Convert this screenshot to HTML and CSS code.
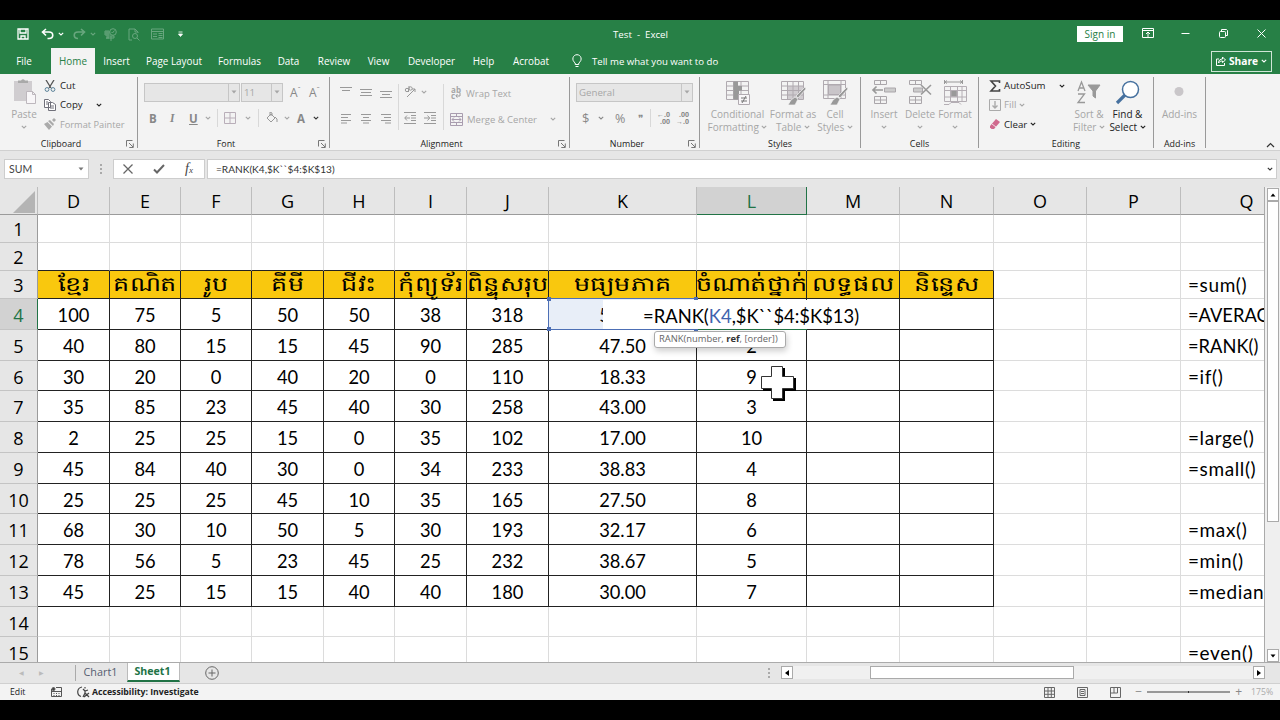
FILE: index.html
```html
<!DOCTYPE html>
<html lang="en">
<head>
    <meta charset="utf-8">
    <title>Test - Excel</title>
    <link rel="stylesheet" href="styles.css">
</head>
<body>
<svg width="0" height="0" class="defs">
    <symbol id="chev" viewBox="0 0 6 4"><path d="M.8.8 3 3 5.200.8" fill="none" stroke="currentColor" stroke-width="1.100"/></symbol>
    <symbol id="launch" viewBox="0 0 8 8"><path d="M.5 6.500V.5h6M3 3l4 4M7.300 3.500v4h-4" fill="none" stroke="currentColor"/></symbol>
    <symbol id="tri" viewBox="0 0 6 4"><path d="M.5.5h5L3 3.500z" fill="currentColor"/></symbol>
</svg>
<div class="window">
    <header class="titlebar">
        <div class="quick">
            <svg width="12" height="12" viewBox="0 0 12 12" fill="none" stroke="#fff" stroke-width="1.300"><path d="M1 1h10v10H1zM3 1v4h6V1M4 11V8h4v3"/></svg>
            <svg class="undo" width="13" height="12" viewBox="0 0 13 12" fill="none" stroke="#fff" stroke-width="1.600"><path d="M5 1 1.500 4 5 7.500M2 4h6c5 0 5 6.500 0 6.500H6.500"/></svg>
            <svg class="ch1" width="6" height="4"><use href="#chev"/></svg>
            <svg class="dim redo" width="13" height="12" viewBox="0 0 13 12" fill="none" stroke="#fff" stroke-width="1.600"><path d="m8 1 3.500 3L8 7.500M11 4H5c-5 0-5 6.500 0 6.500"/></svg>
            <svg class="dim ch1" width="6" height="4"><use href="#chev"/></svg>
            <svg class="dim i1" width="13" height="13" viewBox="0 0 13 13" fill="none" stroke="#fff"><circle cx="9" cy="4" r="3.300"/><path d="m7.500 4 1 1 2-2.500M1 3h4v4H1zM1 5h4M3 3v8M4 8h6v2H4zM7 8v5M2 10h3"/></svg>
            <svg class="dim i2" width="12" height="13" viewBox="0 0 12 13" fill="none" stroke="#fff"><path d="M4 12H1V1h6l3 3v1M7 1v3h3"/><circle cx="7" cy="8" r="2.500"/><path d="m9 10 2.500 2.500"/></svg>
            <svg class="dim i3" width="13" height="12" viewBox="0 0 13 12" fill="none" stroke="#fff"><path d="M.5 1h12v10H.5zM.5 3.500h12M2 6h4M2 8.500h4M7.500 5.500h4M7.500 7.500h4M7.500 9.500h4"/></svg>
            <svg class="i4" width="5" height="7" viewBox="0 0 5 7"><path d="M.5 1h4M.5 3h4L2.500 5.500z" stroke="#fff" fill="#fff" stroke-width=".8"/></svg>
        </div>
        <div class="doc-name">Test&nbsp; -&nbsp; Excel</div>
        <div class="win-buttons">
            <span class="signin">Sign in</span>
            <svg class="w1" width="12" height="10" viewBox="0 0 12 10" fill="none" stroke="#fff"><path d="M.5.500h11v9H.5zM.5 2.500h11M6 9V4M4 6l2-2 2 2"/></svg>
            <svg class="w2" width="9" height="9" viewBox="0 0 9 9" stroke="#fff"><path d="M.5 4.500h8"/></svg>
            <svg class="w3" width="9" height="9" viewBox="0 0 9 9" fill="none" stroke="#fff"><rect x=".5" y="2.500" width="6" height="6" rx="1"/><path d="M2.500 2V.5h5l1 1v5H7"/></svg>
            <svg class="w4" width="9" height="9" viewBox="0 0 9 9" stroke="#fff"><path d="m.5.500 8 8m0-8-8 8"/></svg>
        </div>
    </header>

    <nav class="tabs">
        <span class="t-file">File</span>
        <span class="t-home active">Home</span>
        <span class="t-insert">Insert</span>
        <span class="t-layout">Page Layout</span>
        <span class="t-formulas">Formulas</span>
        <span class="t-data">Data</span>
        <span class="t-review">Review</span>
        <span class="t-view">View</span>
        <span class="t-dev">Developer</span>
        <span class="t-help">Help</span>
        <span class="t-acrobat">Acrobat</span>
        <svg class="bulb" width="10" height="14" viewBox="0 0 10 14" fill="none" stroke="#fff"><path d="M3.200 10.500V9C-1 6 1 .7 5 .7S11 6 6.800 9v1.500zM3.500 12.500h3"/></svg>
        <span class="tell">Tell me what you want to do</span>
        <span class="share">
            <svg width="10" height="10" viewBox="0 0 10 10" fill="none" stroke="#fff"><path d="M3 3H.5v6.500h8V7M2.500 7c0-3 2-4 4-4V1l3 3-3 2.500V5c-2 0-3 .5-4 2z"/></svg>
            Share
            <svg width="6" height="4"><use href="#chev"/></svg>
        </span>
    </nav>

    <section class="ribbon">
        <div class="group g-clipboard">
            <div class="group-body">
                <div class="big paste off">
                    <svg width="25" height="28" viewBox="0 0 25 28"><path d="M2 3h18v20H2z" fill="#d0cdd0"/><path d="M6 5V2.500h3Q11 0 13 2.500h3V5z" fill="#a9a9a9"/><path d="M14.500 13.500h6l3 3v9h-9zM20.500 13.500v3h3" fill="#f8f6f8" stroke="#bdb7bd"/></svg>
                    <span>Paste</span>
                    <svg width="6" height="4"><use href="#chev"/></svg>
                </div>
                <div class="stack clip-list">
                    <div><svg width="12" height="12" viewBox="0 0 12 12" fill="none"><path d="m2 0 5 8M10 0 5 8" stroke="#555" stroke-width="1.300"/><circle cx="3" cy="9.500" r="1.900" stroke="#5b8299"/><circle cx="9" cy="9.500" r="1.900" stroke="#5b8299"/></svg>Cut</div>
                    <div><svg width="12" height="12" viewBox="0 0 12 12" fill="#fff" stroke="#70707a"><path d="M.5.500h4l2 2v6h-6zM4.500 3.500h4l3 2v6h-7zM6 7h4M6 9h4M2 3h2M2 5h2"/></svg>Copy<svg class="copy-ch" width="6" height="4"><use href="#chev"/></svg></div>
                    <div class="off painter"><svg width="12" height="12" viewBox="0 0 12 12" fill="#aaa"><path d="m8 2 2-2 2 2-2 2zM4 3l2-1 4 4-1 2zM0 6l3.500-2L8 8.500 5 12z"/></svg>Format Painter</div>
                </div>
            </div>
            <div class="group-name">Clipboard<svg width="8" height="8"><use href="#launch"/></svg></div>
        </div>

        <div class="group g-font off">
            <div class="group-body col">
                <div class="line l1">
                    <span class="combo font-name"><i></i><b><svg width="6" height="4"><use href="#tri"/></svg></b></span>
                    <span class="combo font-size"><i>11</i><b><svg width="6" height="4"><use href="#tri"/></svg></b></span>
                    <span class="grow">A<sup>&#710;</sup></span>
                    <span class="grow">A<sup>&#711;</sup></span>
                </div>
                <div class="line l2">
                    <b class="fb">B</b><b class="fi">I</b><b class="fu">U</b>
                    <svg class="c1" width="6" height="4"><use href="#chev"/></svg>
                    <i class="sep"></i>
                    <svg class="bd" width="12" height="12" viewBox="0 0 12 12" fill="none" stroke="#b9aeb9"><path d="M.5.500h11v11H.5zM6 .5v11M.5 6h11"/></svg>
                    <svg class="c2" width="6" height="4"><use href="#chev"/></svg>
                    <i class="sep"></i>
                    <svg class="bk" width="12" height="12" viewBox="0 0 12 12" fill="none" stroke="#999"><path d="m1 6 4-4 4 4-4 4zM4 4V0l2 1v3M9 5l2 2v3"/></svg>
                    <svg class="c3" width="6" height="4"><use href="#chev"/></svg>
                    <b class="fa">A</b>
                    <svg class="c4" width="6" height="4"><use href="#chev"/></svg>
                </div>
            </div>
            <div class="group-name">Font<svg width="8" height="8"><use href="#launch"/></svg></div>
        </div>

        <div class="group g-align off">
            <div class="group-body align-body">
                <div class="al-grid">
                    <svg width="12" height="12" viewBox="0 0 12 12" stroke="#999"><path d="M0 1.500h12M2 4.500h8"/></svg>
                    <svg width="12" height="12" viewBox="0 0 12 12" stroke="#999"><path d="M0 3.500h12M1 6.500h10M0 9.500h12"/></svg>
                    <svg width="12" height="12" viewBox="0 0 12 12" stroke="#999"><path d="M0 5.500h12M2 8.500h8M0 11.500h12"/></svg>
                    <svg width="12" height="12" viewBox="0 0 12 12" stroke="#999"><path d="M1 2.500h10M1 5.500h7M1 8.500h10M1 11h6"/></svg>
                    <svg width="12" height="12" viewBox="0 0 12 12" stroke="#999"><path d="M1 2.500h10M3 5.500h6M1 8.500h10M3 11h6"/></svg>
                    <svg width="12" height="12" viewBox="0 0 12 12" stroke="#999"><path d="M1 2.500h10M4 5.500h7M1 8.500h10M5 11h6"/></svg>
                </div>
                <div class="indent">
                    <div><svg width="14" height="12" viewBox="0 0 14 12" stroke="#999" fill="none"><path d="M3 11 11 3M8 3h3v3"/><circle cx="3" cy="4" r="1.700"/><circle cx="6.500" cy="2.500" r="1.700"/><path d="M4.500 2.500v3.500M5 0v4"/></svg><svg width="6" height="4"><use href="#chev"/></svg></div>
                    <div class="ind2"><svg width="12" height="12" viewBox="0 0 12 12" stroke="#999" fill="none"><path d="M0 .5h12M7 3.500h5M7 6h5M7 8.500h5M0 11.500h12M6 6H1M3 3.500.7 6 3 8.500" /></svg><svg width="12" height="12" viewBox="0 0 12 12" stroke="#999" fill="none"><path d="M0 .5h12M7 3.500h5M7 6h5M7 8.500h5M0 11.500h12M0 6h5.500M3.500 3.500 5.700 6 3.500 8.500"/></svg></div>
                </div>
                <div class="wrap">
                    <div><span class="wrap-icon"><span>ab</span><span>c<svg width="6" height="5" viewBox="0 0 6 5" fill="none" stroke="#999"><path d="M5 0v3H1M2.500 1 .8 3l1.700 1.700"/></svg></span></span>Wrap Text</div>
                    <div><svg width="13" height="13" viewBox="0 0 13 13" fill="none" stroke="#a99daf"><path d="M.5.500h12v12H.5zM.5 3.500h12M.5 9.500h12M6.500.5v3M6.500 9.500v3M2 6.500h9M4 4.500l-2 2 2 2M9 4.500l2 2-2 2"/></svg>Merge &amp; Center<svg class="mc" width="6" height="4"><use href="#chev"/></svg></div>
                </div>
            </div>
            <div class="group-name">Alignment<svg width="8" height="8"><use href="#launch"/></svg></div>
        </div>

        <div class="group g-number off">
            <div class="group-body col">
                <div class="line l1"><span class="combo general"><i>General</i><b><svg width="6" height="4"><use href="#tri"/></svg></b></span></div>
                <div class="line l2 nums">
                    <span class="dollar">$</span><svg class="n1" width="6" height="4"><use href="#chev"/></svg><span class="pct">%</span><span class="comma">&#10078;</span>
                    <i class="sep"></i>
                    <span class="dec">&#8592;.0<br>.00</span><span class="dec">.00<br>&#8594;.0</span>
                </div>
            </div>
            <div class="group-name">Number<svg width="8" height="8"><use href="#launch"/></svg></div>
        </div>

        <div class="group g-styles off">
            <div class="group-body">
                <div class="big s1"><svg width="26" height="26" viewBox="0 0 26 26" fill="none" stroke="#b0aab0"><path d="M1.500 1.500h22v18h-22zM1.500 6h22M1.500 10.500h22M1.500 15h22M8.500 1.500v18M16 1.500v18"/><path d="M8.500 1.500H13V6h4v4.500h-3v9H8.500z" fill="#999" stroke="none"/><path d="M13.500 14.500h11v10h-11z" fill="#f8f6f8"/><path d="M16 18h6M16 21h6M21 16l-4 7" stroke="#777"/></svg>
                    <span>Conditional<br>Formatting <svg width="6" height="4"><use href="#chev"/></svg></span></div>
                <div class="big s2"><svg width="26" height="26" viewBox="0 0 26 26" fill="none" stroke="#b0aab0"><path d="M8 6h15v14H8z" fill="#d0ccd0" stroke="none"/><path d="M1.500 1.500h22v18h-22zM1.500 6h22M1.500 10.500h22M1.500 15h22M7.500 1.500v18M13 1.500v18M18.500 1.500v18"/><path d="m25 7-9 9 2 2 8-9zM15 17l-4 3-3 5h7l3-6z" fill="#999" stroke="#f3f3f3" stroke-width=".7"/></svg>
                    <span>Format as<br>Table <svg width="6" height="4"><use href="#chev"/></svg></span></div>
                <div class="big s3"><svg width="26" height="26" viewBox="0 0 26 26" fill="none" stroke="#b0aab0"><path d="M1.500.5h22v18h-22zM1.500 4.500h22M1.500 15h22M6 .5v18M19 .5v18"/><path d="M6.500 5h12v9.500h-12z" fill="#c9c5c9"/><path d="m25 7-9 9 2 2 8-9zM15 17l-4 3-3 5h7l3-6z" fill="#999" stroke="#f3f3f3" stroke-width=".7"/></svg>
                    <span>Cell<br>Styles <svg width="6" height="4"><use href="#chev"/></svg></span></div>
            </div>
            <div class="group-name">Styles</div>
        </div>

        <div class="group g-cells off">
            <div class="group-body">
                <div class="big c-ins"><svg width="26" height="26" viewBox="0 0 26 26" fill="none" stroke="#aaa6aa"><path d="M3.500.5h12v4h-12zM9.500.5v4M3.500 16.500h12v7h-12zM9.500 16.500v7M3.500 20h12"/><path d="M13.500 8h11v4h-11z" fill="#ccc"/><path d="M12 10H2M5.500 6.500 2 10l3.500 3.500" stroke="#999" stroke-width="1.700"/></svg><span>Insert</span><svg width="6" height="4"><use href="#chev"/></svg></div>
                <div class="big c-del"><svg width="26" height="26" viewBox="0 0 26 26" fill="none" stroke="#aaa6aa"><path d="M2.500.5h12v4h-12zM8.500.5v4M2.500 16.500h12v7h-12zM8.500 16.500v7M2.500 20h12"/><path d="M6.500 8h9v4h-9z" fill="#ccc"/><path d="m14 5 10 9.500M24 5l-10 9.500" stroke="#999" stroke-width="1.600"/></svg><span>Delete</span><svg width="6" height="4"><use href="#chev"/></svg></div>
                <div class="big c-fmt"><svg width="26" height="26" viewBox="0 0 26 26" fill="none" stroke="#b4aeb4"><path d="M2.500 0v4M20.500 0v4M3 2h17M5 .5 3 2l2 1.500M18 .5 20 2l-2 1.500" stroke="#999"/><path d="M2.500 6.500h22v15h-22zM2.500 10.500h22M2.500 17h22M8.500 6.500v15M15.500 6.500v15M20 6.500v15M2 24.500h5l2-2h8l2 2"/><path d="M9 10.500h6v6H9z" fill="#999"/></svg><span>Format</span><svg width="6" height="4"><use href="#chev"/></svg></div>
            </div>
            <div class="group-name">Cells</div>
        </div>

        <div class="group g-edit">
            <div class="group-body">
                <div class="stack edit-list">
                    <div><svg width="12" height="12" viewBox="0 0 12 12" fill="none" stroke="#444" stroke-width="1.600"><path d="M10.500 3V1H2l4.500 5L2 11h8.500V9"/></svg>AutoSum<svg class="as-ch" width="6" height="4"><use href="#chev"/></svg></div>
                    <div class="off"><svg width="12" height="12" viewBox="0 0 12 12" fill="none" stroke="#aaa"><path d="M.5.500h11v11H.5z"/><path d="M6 2v7M3.500 6.500 6 9l2.500-2.500" stroke-width="1.400"/></svg>Fill <svg width="6" height="4"><use href="#chev"/></svg></div>
                    <div><svg width="12" height="12" viewBox="0 0 12 12"><path d="m1 8 6-7 4 3-6 7H2.500L1 9.500z" fill="#d06a8e"/><path d="m3 6 4 3" stroke="#f3dbe4"/></svg>Clear <svg width="6" height="4"><use href="#chev"/></svg></div>
                </div>
                <div class="big sort off"><svg width="26" height="26" viewBox="0 0 26 26" fill="none" stroke="#999"><path d="M2 11 5.500 2 9 11M3.300 8h4.500M2 14h6.500L2 22.500h7" stroke-width="1.300"/><path d="M12 5h12l-4.500 6v7L17 16v-5z" fill="#999"/></svg><span>Sort &amp;<br>Filter <svg width="6" height="4"><use href="#chev"/></svg></span></div>
                <div class="big find"><svg width="26" height="26" viewBox="0 0 26 26" fill="none" stroke="#46719f"><circle cx="15.500" cy="9.500" r="8" fill="#fff" stroke-width="1.500"/><path d="m10 15-8 8" stroke-width="3.200"/></svg><span>Find &amp;<br>Select <svg width="6" height="4"><use href="#chev"/></svg></span></div>
            </div>
            <div class="group-name">Editing</div>
        </div>

        <div class="group g-addins">
            <div class="group-body">
                <div class="big add off"><svg width="26" height="26" viewBox="0 0 26 26"><circle cx="12" cy="11.500" r="4.500" fill="#c9c6c9"/></svg><span>Add-ins</span></div>
            </div>
            <div class="group-name">Add-ins</div>
        </div>
        <svg class="collapse" width="9" height="6" viewBox="0 0 9 6" fill="none" stroke="#333" stroke-width="1.200"><path d="m1 5 3.500-3.500L8 5"/></svg>
    </section>

    <section class="formula-bar">
        <div class="name-box">SUM<svg width="6" height="4"><use href="#tri"/></svg></div>
        <div class="dots"><i></i><i></i><i></i></div>
        <div class="fx-box">
            <svg width="10" height="10" viewBox="0 0 10 10" stroke="#666" stroke-width="1.300"><path d="m.5.500 9 9m0-9-9 9"/></svg>
            <svg width="12" height="10" viewBox="0 0 12 10" stroke="#666" stroke-width="2" fill="none"><path d="m1 5.500 3 3L11 1"/></svg>
            <em>f<small>x</small></em>
        </div>
        <div class="formula">=RANK(K4,$K``$4:$K$13)<svg width="6" height="4"><use href="#chev"/></svg></div>
    </section>

    <main class="sheet-area">
        <div class="sheet">
            <table>
                <colgroup>
                    <col class="w38"><col class="w72"><col class="w71"><col class="w71"><col class="w72"><col class="w71"><col class="w72"><col class="w82"><col class="w148"><col class="w110"><col class="w93"><col class="w94"><col class="w93"><col class="w94"><col class="w132">
                </colgroup>
                <tr class="letters"><th class="corner"><svg width="22" height="22" viewBox="0 0 22 22"><path d="M22 0v22H0z" fill="#b4b4b4"/></svg></th><th>D</th><th>E</th><th>F</th><th>G</th><th>H</th><th>I</th><th>J</th><th>K</th><th class="sel">L</th><th>M</th><th>N</th><th>O</th><th>P</th><th>Q</th></tr>
                <tr class="h28"><th>1</th><td></td><td></td><td></td><td></td><td></td><td></td><td></td><td></td><td></td><td></td><td></td><td></td><td></td><td></td></tr>
                <tr class="h28 above"><th>2</th><td></td><td></td><td></td><td></td><td></td><td></td><td></td><td></td><td></td><td></td><td></td><td></td><td></td><td></td></tr>
                <tr class="h28 khmer box"><th>3</th><td><span>ខ្មែរ</span></td><td><span>គណិត</span></td><td><span>រូប</span></td><td><span>គីមី</span></td><td><span>ជីវះ</span></td><td><span>កុំព្យូទ័រ</span></td><td><span>ពិន្ទុសរុប</span></td><td><span>មធ្យមភាគ</span></td><td><span>ចំណាត់ថ្នាក់</span></td><td><span>លទ្ធផល</span></td><td><span>និន្ទេស</span></td><td></td><td></td><td class="lc">=sum()</td></tr>
                <tr class="h31 box"><th class="sel">4</th><td>100</td><td>75</td><td>5</td><td>50</td><td>50</td><td>38</td><td>318</td><td>53.00</td><td></td><td></td><td></td><td></td><td></td><td>=AVERAGE()</td></tr>
                <tr class="h31 box"><th>5</th><td>40</td><td>80</td><td>15</td><td>15</td><td>45</td><td>90</td><td>285</td><td>47.50</td><td>2</td><td></td><td></td><td></td><td></td><td>=RANK()</td></tr>
                <tr class="h30 box"><th>6</th><td>30</td><td>20</td><td>0</td><td>40</td><td>20</td><td>0</td><td>110</td><td>18.33</td><td>9</td><td></td><td></td><td></td><td></td><td class="lc">=if()</td></tr>
                <tr class="h31 box"><th>7</th><td>35</td><td>85</td><td>23</td><td>45</td><td>40</td><td>30</td><td>258</td><td>43.00</td><td>3</td><td></td><td></td><td></td><td></td><td></td></tr>
                <tr class="h31 box"><th>8</th><td>2</td><td>25</td><td>25</td><td>15</td><td>0</td><td>35</td><td>102</td><td>17.00</td><td>10</td><td></td><td></td><td></td><td></td><td class="lc">=large()</td></tr>
                <tr class="h31 box"><th>9</th><td>45</td><td>84</td><td>40</td><td>30</td><td>0</td><td>34</td><td>233</td><td>38.83</td><td>4</td><td></td><td></td><td></td><td></td><td class="lc">=small()</td></tr>
                <tr class="h30 box"><th>10</th><td>25</td><td>25</td><td>25</td><td>45</td><td>10</td><td>35</td><td>165</td><td>27.50</td><td>8</td><td></td><td></td><td></td><td></td><td></td></tr>
                <tr class="h31 box"><th>11</th><td>68</td><td>30</td><td>10</td><td>50</td><td>5</td><td>30</td><td>193</td><td>32.17</td><td>6</td><td></td><td></td><td></td><td></td><td class="lc">=max()</td></tr>
                <tr class="h31 box"><th>12</th><td>78</td><td>56</td><td>5</td><td>23</td><td>45</td><td>25</td><td>232</td><td>38.67</td><td>5</td><td></td><td></td><td></td><td></td><td class="lc">=min()</td></tr>
                <tr class="h31 box"><th>13</th><td>45</td><td>25</td><td>15</td><td>15</td><td>40</td><td>40</td><td>180</td><td>30.00</td><td>7</td><td></td><td></td><td></td><td></td><td class="lc">=median()</td></tr>
                <tr class="h30"><th>14</th><td></td><td></td><td></td><td></td><td></td><td></td><td></td><td></td><td></td><td></td><td></td><td></td><td></td><td></td></tr>
                <tr class="h31"><th>15</th><td></td><td></td><td></td><td></td><td></td><td></td><td></td><td></td><td></td><td></td><td></td><td></td><td></td><td class="lc">=even()</td></tr>
            </table>
            <!-- range highlight, cell editor and argument tooltip float over the grid -->
            <div class="range"><i></i><i></i><i></i><i></i></div>
            <div class="editor">=RANK(<span>K4</span>,$K``$4:$K$13)</div>
            <div class="active-edge"></div>
            <div class="hint">RANK(number, <b>ref</b>, [order])</div>
            <svg class="cursor" width="36" height="36" viewBox="0 0 36 36"><path d="M13 3h12v10h11v13H25v10H13V26H3V13h10z" fill="#000"/><path d="M11.500 1.500h11v10h11v12h-11v10h-11v-10h-10v-12h10z" fill="#fff" stroke="#333"/></svg>
        </div>
        <div class="vscroll">
            <span class="sbtn"><svg width="6" height="4"><use href="#tri" transform="rotate(180 3 2)"/></svg></span>
            <span class="vthumb"></span>
            <span class="sbtn vdown"><svg width="6" height="4"><use href="#tri"/></svg></span>
        </div>
    </main>

    <section class="sheet-tabs">
        <div class="arrows"><span>&#9664;</span><span>&#9654;</span></div>
        <span class="stab">Chart1</span>
        <span class="stab on">Sheet1</span>
        <svg class="plus" width="14" height="14" viewBox="0 0 14 14" fill="none" stroke="#666"><circle cx="7" cy="7" r="6.300"/><path d="M7 3.500v7M3.500 7h7"/></svg>
        <div class="dots hs-dots"><i></i><i></i><i></i></div>
        <div class="hscroll">
            <span class="sbtn"><svg width="4" height="6" viewBox="0 0 4 6"><path d="M4 0v6L0 3z"/></svg></span>
            <span class="hthumb"></span>
            <span class="sbtn hright"><svg width="4" height="6" viewBox="0 0 4 6"><path d="M0 0v6l4-3z"/></svg></span>
        </div>
    </section>

    <footer class="status">
        <span class="mode">Edit</span>
        <svg class="macro" width="11" height="10" viewBox="0 0 11 10" fill="none" stroke="#555"><path d="M.5 2v7.500h10v-9H5M1 4.500h9M2.500 6.500h1M5 6.500h1M7.500 6.500h1M2.500 8.500h1M5 8.500h1M7.500 8.500h1"/><circle cx="2.500" cy="2" r="1.500" fill="#444"/></svg>
        <svg class="acc" width="13" height="12" viewBox="0 0 13 12" fill="none" stroke="#444"><path d="M5 1C-.5 2-.5 9 4 10.500M6 3l2 2 3-1M8 5v2l-2 4M8 7l4 4M12 7l-5 4M8 1v1.500" stroke-width="1.200"/></svg>
        <b>Accessibility: Investigate</b>
        <div class="views">
            <svg width="11" height="11" viewBox="0 0 11 11" fill="none" stroke="#666"><path d="M.5.500h10v10H.5zM.5 4h10M.5 7.300h10M4 .5v10M7.300.5v10"/></svg>
            <svg width="11" height="11" viewBox="0 0 11 11" fill="none" stroke="#666"><path d="M.5.500h10v10H.5zM3 2.500h5v6H3zM4 4.500h3M4 6.500h3"/></svg>
            <svg width="11" height="11" viewBox="0 0 11 11" fill="none" stroke="#666"><path d="M.5.500h10v10H.5zM4 .5V6M7.500.5V6H1"/></svg>
        </div>
        <div class="zoom"><span>&#8722;</span><i></i><span>+</span></div>
        <span class="percent">175%</span>
    </footer>
</div>
</body>
</html>
```
FILE: styles.css
```css
* {
    box-sizing: border-box;
}

body {
    margin: 0;
    background: #000;
    font-family: "Open Sans", "Noto Sans", sans-serif;
    font-size: 10px;
    color: #222;
    overflow: hidden;
}

svg {
    flex: none;
    display: block;
}

i {
    font-style: normal;
}

.defs {
    display: none;
}

.window {
    width: 1280px;
    height: 680px;
    margin: 20px 0;
    background: #e6e6e6;
    display: flex;
    flex-direction: column;
    overflow: hidden;
}

/* title bar */
.titlebar {
    height: 28px;
    background: #278046;
    color: #fff;
    display: flex;
    align-items: center;
    flex: none;
}

.quick {
    display: flex;
    align-items: center;
    width: 613px;
    padding-left: 17px;
}

.dim {
    opacity: .3;
}

.undo { margin-left: 12px; }
.ch1 { margin-left: 4px; }
.redo { margin-left: 9px; }
.i1 { margin-left: 8px; }
.i2 { margin-left: 11px; }
.i3 { margin-left: 11px; }
.i4 { margin-left: 14px; }

.doc-name {
    width: 464px;
    white-space: nowrap;
    font-size: 9.700px;
    padding-top: 1px;
}

.win-buttons {
    display: flex;
    align-items: center;
}

.signin {
    width: 46px;
    height: 16px;
    line-height: 16px;
    background: #fff;
    color: #278046;
    text-align: center;
}

.w1 { margin: 0 0 2px 19px; }
.w2 { margin: 0 0 2px 27px; }
.w3 { margin: 0 0 2px 29px; }
.w4 { margin: 0 0 2px 29px; }

/* ribbon tabs */
.tabs {
    height: 26px;
    background: #278046;
    color: #fff;
    display: flex;
    align-items: center;
    flex: none;
}

.tabs > span {
    line-height: 27px;
    height: 26px;
    text-align: center;
    white-space: nowrap;
    font-size: 9.900px;
}

.tabs .active {
    background: #f3f3f3;
    color: #278046;
}

.t-file { width: 48px; margin-right: 3px; }
.t-home { width: 44px; }
.t-insert { width: 43px; }
.t-layout { width: 72px; }
.t-formulas { width: 59px; }
.t-data { width: 39px; }
.t-review { width: 52px; }
.t-view { width: 37px; }
.t-dev { width: 69px; }
.t-help { width: 35px; }
.t-acrobat { width: 60px; }
.bulb { margin-left: 11px; }

.tabs .tell {
    margin-left: 10px;
    font-size: 9.600px;
}

.tabs .share {
    display: flex;
    align-items: center;
    gap: 3px;
    margin: 0 8px 0 auto;
    width: 61px;
    height: 21px;
    padding-left: 4px;
    border: 1px solid #cfe5d6;
    font-weight: bold;
    font-size: 10.200px;
}

/* ribbon */
.ribbon {
    height: 77px;
    background: #f3f3f3;
    border-bottom: 1px solid #d0d0d0;
    display: flex;
    padding-top: 3px;
    flex: none;
}

.off {
    color: #a6a6a6;
}

.group {
    height: 71px;
    border-right: 1px solid #999;
    display: flex;
    flex-direction: column;
    flex: none;
}

.group-body {
    display: flex;
    height: 59px;
    flex: none;
}

.group-body.col {
    flex-direction: column;
}

.group-name {
    height: 12px;
    line-height: 16px;
    text-align: center;
    color: #222;
    font-size: 8.900px;
    position: relative;
}

.group-name svg {
    position: absolute;
    right: 3px;
    top: 4px;
    color: #777;
}

.g-clipboard { width: 138px; }
.g-font { width: 192px; }
.g-align { width: 240px; }
.g-number { width: 130px; }
.g-styles { width: 161px; }
.g-cells { width: 118px; }
.g-edit { width: 175px; }
.g-addins { width: 52px; }

.g-clipboard .group-name { padding-right: 15px; }
.g-font .group-name { padding-right: 15px; }
.g-align .group-name { padding-right: 16px; }
.g-number .group-name { padding-right: 15px; }

.big {
    display: flex;
    flex-direction: column;
    align-items: center;
    text-align: center;
    line-height: 13px;
    flex: none;
    white-space: nowrap;
    padding-top: 3px;
}

.big > span svg {
    display: inline-block;
    vertical-align: 2px;
}

.big > span {
    margin-top: 2px;
}

.big > span + svg {
    margin-top: 4px;
}

.paste { width: 48px; padding-top: 1px; }

.stack > div {
    display: flex;
    align-items: center;
    height: 19.300px;
    gap: 3px;
    white-space: nowrap;
    font-size: 9.700px;
}

.clip-list { margin: -1px 0 0 -4px; }
.clip-list > div { gap: 4px; }
.copy-ch { margin-left: 9px; }

.stack .painter {
    font-size: 9.250px;
}

.line {
    display: flex;
    align-items: center;
}

.l1 {
    height: 30px;
}

.l2 {
    height: 22px;
}

.combo {
    display: flex;
    height: 19px;
    border: 1px solid #c6c6c6;
    background: #e6e6e6;
    line-height: 17px;
}

.combo i {
    flex: 1;
    padding-left: 2px;
    font-size: 9.700px;
}

.combo b {
    width: 11px;
    border-left: 1px solid #c6c6c6;
    display: flex;
    align-items: center;
    justify-content: center;
}

.font-name { width: 96px; margin-left: 6px; }
.font-size { width: 42px; margin: 0 7px 0 1px; }

.grow {
    width: 19px;
    font-size: 12px;
    color: #888;
    white-space: nowrap;
}

.grow sup {
    font-size: 8px;
    line-height: 1px;
}

.l2 b {
    font-size: 11.500px;
    color: #888;
}

.sep {
    width: 1px;
    height: 18px;
    background: #d8d8d8;
}

.fb { width: 21px; margin-left: 11px; }
.fi { width: 19px; font-style: italic; font-family: "Liberation Serif", serif; }
.fu { text-decoration: underline; width: 9px; }
.c1 { margin: 0 6px 0 7px; }
.bd { margin-left: 6px; }
.c2 { margin: 0 7px 0 9px; }
.bk { margin-left: 7px; }
.c3 { margin: 0 7px 0 6px; }
.c4 { margin-left: 8px; color: #333; }

.al-grid {
    display: grid;
    grid-template-columns: 12px 12px 12px;
    grid-template-rows: 12px 12px;
    gap: 14px 8px;
    padding: 9px 0 0 10px;
    align-content: start;
}

.indent {
    margin: 7px 0 0 6px;
    border-left: 1px solid #d8d8d8;
    border-right: 1px solid #d8d8d8;
    height: 46px;
    width: 46px;
    padding: 2px 0 0 5px;
}

.indent > div {
    display: flex;
    align-items: center;
    gap: 3px;
    height: 12px;
    margin-bottom: 14px;
}

.indent .ind2 {
    gap: 8px;
}

.wrap {
    margin-left: 6px;
    padding-top: 3px;
}

.wrap > div {
    display: flex;
    align-items: center;
    gap: 4px;
    height: 26px;
    white-space: nowrap;
    font-size: 9.500px;
}

.wrap-icon {
    display: flex;
    flex-direction: column;
    width: 12px;
    font-size: 8px;
    line-height: 6px;
    font-weight: bold;
    text-align: center;
}

.wrap-icon span {
    display: flex;
    justify-content: center;
    height: 6px;
}

.mc { margin-left: 9px; }
.general { width: 117px; margin-left: 6px; }

.nums {
    color: #888;
}

.dollar { font-size: 13px; margin-left: 12px; width: 8px; }
.n1 { margin: 0 11px 0 8px; }
.pct { font-size: 12.500px; width: 23px; }
.comma { width: 12px; font-size: 10px; }
.dec { font-size: 7px; line-height: 7px; font-weight: bold; margin-left: 5px; width: 14px; text-align: right; }

.s1 { width: 75px; }
.s2 { width: 36px; }
.s3 { width: 48px; }
.c-ins { width: 46px; }
.c-del { width: 26px; }
.c-fmt { width: 44px; }

.edit-list { width: 90px; padding-left: 10px; margin-top: -1px; }
.as-ch { margin-left: 10px; }
.sort { width: 40px; }
.find { width: 37px; }
.add { width: 51px; }

.collapse {
    margin: 65px 0 0 60px;
}

/* formula bar */
.formula-bar {
    height: 36px;
    display: flex;
    padding: 8px 3px 8px 4px;
    flex: none;
    font-family: Lato, sans-serif;
}

.formula-bar > div:not(.dots) {
    background: #fff;
    border: 1px solid #cdcdcd;
    display: flex;
    align-items: center;
    height: 20px;
}

.name-box {
    width: 85px;
    padding: 0 4px 0 4px;
    justify-content: space-between;
    color: #444;
    font-size: 10.500px;
}

.name-box svg {
    color: #777;
}

.dots {
    width: 24px;
    display: flex;
    flex-direction: column;
    gap: 2px;
    align-items: center;
    justify-content: center;
}

.dots i {
    width: 2px;
    height: 2px;
    background: #aaa;
}

.fx-box {
    width: 92px;
    justify-content: space-between;
    padding: 0 11px 0 9px;
}

.fx-box em {
    font: italic 14px "Liberation Serif", serif;
    color: #444;
}

.fx-box small {
    font-size: 9px;
}

.formula {
    flex: 1;
    margin-left: 2px;
    padding: 0 3px 0 8px;
    justify-content: space-between;
    color: #333;
    font-size: 10.100px;
}

/* grid */
.sheet-area {
    display: flex;
    height: 475px;
    flex: none;
}

.sheet {
    width: 1265px;
    overflow: hidden;
    position: relative;
    background: #fff;
    border-right: 1px solid #aaa;
}

table {
    width: 1313px;
    table-layout: fixed;
    border-collapse: separate;
    border-spacing: 0;
    font-family: Lato, sans-serif;
    font-size: 18.300px;
    color: #000;
}

.w38 { width: 38px; }
.w71 { width: 71px; }
.w72 { width: 72px; }
.w82 { width: 82px; }
.w93 { width: 93px; }
.w94 { width: 94px; }
.w110 { width: 110px; }
.w132 { width: 132px; }
.w148 { width: 148px; }

td, th {
    padding: 0;
    border-right: 1px solid #dcdcdc;
    border-bottom: 1px solid #dcdcdc;
    text-align: center;
    line-height: 24px;
    white-space: nowrap;
}

.h31 > *, .h30 > * {
    padding-top: 2px;
}

th {
    background: #e6e6e6;
    font-weight: normal;
    font-family: "Open Sans", sans-serif;
    font-size: 18px;
    border-right-color: #9b9b9b;
    border-bottom-color: #c4c4c4;
}

td:last-child {
    text-align: left;
    padding-left: 7px;
}

td.lc {
    font-size: 19px;
    letter-spacing: .6px;
}

.letters th {
    border-right-color: #bdbdbd;
    border-bottom-color: #9b9b9b;
}

.letters { height: 28px; }
.h28 { height: 28px; }
.h30 { height: 30px; }
.h31 { height: 31px; }

.corner svg {
    margin: 2px 0 0 13px;
}

.letters .sel {
    background: #d2d2d2;
    color: #217346;
    border-bottom-color: #217346;
}

th.sel {
    background: #d2d2d2;
    color: #217346;
    border-right-color: #217346;
}

.box td:nth-child(-n+12) {
    border-color: #222;
}

.above td:nth-child(-n+12) {
    border-bottom-color: #222;
}

.khmer td:nth-child(-n+12) {
    background: #f9c80e;
    line-height: 20px;
}

.khmer span {
    display: block;
    height: 20px;
    font-size: 20px;
    transform: translateY(-2px) scaleX(1.27);
}

.range {
    position: absolute;
    left: 548px;
    top: 111px;
    width: 149px;
    height: 32px;
    border: 1px solid #4d6fb5;
    background: rgba(68, 114, 196, .12);
}

.range i {
    position: absolute;
    width: 4px;
    height: 4px;
    background: #4d6fb5;
}

.range i:nth-child(1) { left: -2px; top: -2px; }
.range i:nth-child(2) { right: -2px; top: -2px; }
.range i:nth-child(3) { left: -2px; bottom: -2px; }
.range i:nth-child(4) { right: -2px; bottom: -2px; }

.editor {
    position: absolute;
    left: 603px;
    top: 113px;
    width: 259px;
    height: 29px;
    padding-left: 40px;
    background: #fff;
    font-family: Lato, sans-serif;
    font-size: 18.400px;
    line-height: 32px;
    color: #000;
    white-space: nowrap;
}

.editor span {
    color: #3f62ad;
}

.active-edge {
    position: absolute;
    left: 698px;
    top: 142px;
    width: 109px;
    height: 1px;
    background: #217346;
}

.hint {
    position: absolute;
    left: 654px;
    top: 144px;
    width: 132px;
    height: 17px;
    line-height: 14px;
    padding-left: 4px;
    border: 1px solid #aaa;
    border-radius: 3px;
    background: #fff;
    color: #666;
    font-size: 9.400px;
    white-space: nowrap;
    box-shadow: 1px 3px 6px rgba(0, 0, 0, .2);
}

.hint b {
    color: #333;
}

.cursor {
    position: absolute;
    left: 760px;
    top: 178px;
}

/* scroll bars */
.vscroll {
    width: 15px;
    padding: 1px 1px 0 2px;
    display: flex;
    flex-direction: column;
    background: #efefef;
}

.sbtn {
    width: 12px;
    height: 13px;
    background: #fff;
    border: 1px solid #aaa;
    display: flex;
    align-items: center;
    justify-content: center;
    color: #000;
    flex: none;
}

.vthumb {
    height: 321px;
    width: 12px;
    background: #fff;
    border: 1px solid #aaa;
}

.vdown {
    margin-top: auto;
}

.sheet-tabs {
    height: 21px;
    display: flex;
    border-top: 1px solid #ababab;
    flex: none;
}

.arrows {
    width: 76px;
    height: 16px;
    margin-top: 2px;
    padding-left: 19px;
    display: flex;
    gap: 15px;
    align-items: center;
    color: #bbb;
    font-size: 6px;
    border-right: 1px solid #aaa;
}

.stab {
    width: 51px;
    padding-right: 2px;
    text-align: center;
    line-height: 17px;
    font-size: 10.800px;
    color: #555c70;
}

.stab.on {
    width: 53px;
    height: 19px;
    background: #fff;
    color: #217346;
    font-weight: bold;
    font-size: 10.600px;
    border: 1px solid #bbb;
    border-top: 0;
    border-bottom: 2px solid #217346;
}

.plus {
    margin: 3px 0 0 25px;
}

.hs-dots {
    margin-left: 538px;
    width: 24px;
}

.hscroll {
    display: flex;
    width: 484px;
    height: 13px;
    margin-top: 3px;
    background: #f0f0f0;
}

.hthumb {
    width: 204px;
    margin-left: 77px;
    background: #fff;
    border: 1px solid #aaa;
}

.hright {
    margin-left: auto;
}

/* status bar */
.status {
    height: 17px;
    background: #f3f3f3;
    border-top: 1px solid #d0d0d0;
    display: flex;
    align-items: center;
    font-size: 8.700px;
    flex: none;
}

.mode { width: 51px; padding-left: 10px; }
.acc { margin: 0 2px 0 15px; }

.views {
    display: flex;
    gap: 22px;
    margin-left: auto;
    margin-right: 14px;
}

.zoom {
    display: flex;
    align-items: center;
    color: #888;
    font-size: 12px;
    line-height: 10px;
    gap: 5px;
}

.zoom i {
    width: 83px;
    height: 2px;
    background: linear-gradient(90deg, #999 41px, #333 41px, #333 42px, #999 42px);
}

.percent {
    color: #aaa;
    width: 38px;
    padding-left: 9px;
}
```
